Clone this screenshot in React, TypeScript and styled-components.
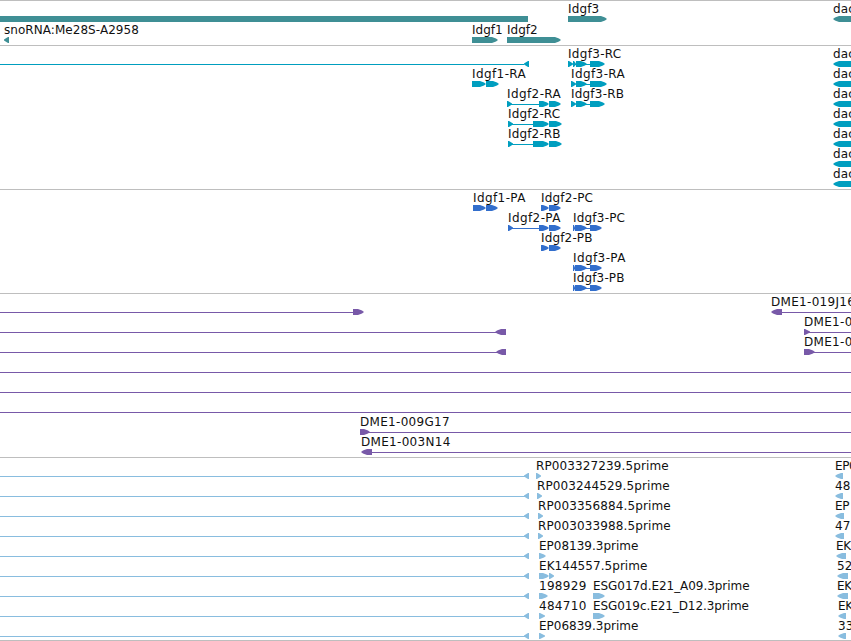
import React from "react";
import styled, { createGlobalStyle } from "styled-components";

type Kind = "line" | "bar" | "right" | "left";
type Glyph = [Kind, number, number];
type LabelItem = { x: number; text: string; gap?: number };
type RowData = { labels?: LabelItem[]; glyphs: Glyph[] };
type TrackData = { color: string; rowHeight?: number; pad: number; rows: RowData[] };

const VIEW_WIDTH = 851;

const GlobalStyle = createGlobalStyle`
  body {
    margin: 0;
    background: white;
    overflow: hidden;
  }
`;

const Viewer = styled.main`
  display: flex;
  flex-direction: column;
  width: ${VIEW_WIDTH}px;
  height: 641px;
  overflow: hidden;
  border-bottom: 1px solid #bebebe;
  box-sizing: border-box;
`;

const Track = styled.section<{ $pad: number }>`
  display: flex;
  flex-direction: column;
  flex: none;
  border-top: 1px solid #bebebe;
  padding-bottom: ${({ $pad }) => $pad}px;
`;

const Row = styled.div<{ $height: number }>`
  position: relative;
  height: ${({ $height }) => $height}px;
  padding-top: 15px;
  box-sizing: border-box;
`;

// labels sit at their genome position
const Label = styled.span<{ $x: number; $gap: number }>`
  position: absolute;
  top: 1px;
  left: ${({ $x }) => $x}px;
  font-family: "DejaVu Sans", sans-serif;
  font-size: 12px;
  line-height: 14px;
  letter-spacing: ${({ $gap }) => $gap}px;
  white-space: nowrap;
  color: #111;
`;

const Glyphs = styled.svg`
  display: block;
  width: ${VIEW_WIDTH}px;
  height: 6px;
`;

// glyph shorthands
const line = (a: number, b: number): Glyph => ["line", a, b];
const bar = (a: number, b: number): Glyph => ["bar", a, b];
const right = (a: number, b: number): Glyph => ["right", a, b];
const left = (a: number, b: number): Glyph => ["left", a, b];

const END = 860;
const dac: LabelItem = { x: 833, text: "dac" };
const dacBox = left(833, END);
const idgf2Tail = [right(549, 562)];
const idgf3Exons = [right(575, 587), line(585, 590), right(590, 602)];

const tracks: TrackData[] = [
  {
    color: "#3f8f95",
    rowHeight: 21,
    pad: 2,
    rows: [
      {
        labels: [{ x: 568, text: "Idgf3" }, dac],
        glyphs: [bar(0, 528), right(568, 607), dacBox],
      },
      {
        labels: [
          { x: 4, text: "snoRNA:Me28S-A2958", gap: 0.05 },
          { x: 472, text: "Idgf1", gap: 0 },
          { x: 507, text: "Idgf2", gap: 0 },
        ],
        glyphs: [left(4, 9), right(472, 498), right(507, 561)],
      },
    ],
  },
  {
    color: "#009ebf",
    pad: 3,
    rows: [
      {
        labels: [{ x: 568, text: "Idgf3-RC", gap: 0.3 }, dac],
        glyphs: [
          line(0, 524),
          left(524, 529),
          right(568, 573),
          right(573, 576),
          right(576, 587),
          line(585, 590),
          right(590, 605),
          dacBox,
        ],
      },
      {
        labels: [
          { x: 472, text: "Idgf1-RA", gap: 0.4 },
          { x: 571, text: "Idgf3-RA", gap: 0.4 },
          dac,
        ],
        glyphs: [
          right(472, 486),
          right(486, 499),
          right(571, 576),
          right(576, 587),
          line(585, 590),
          right(590, 607),
          dacBox,
        ],
      },
      {
        labels: [
          { x: 507, text: "Idgf2-RA", gap: 0.4 },
          { x: 571, text: "Idgf3-RB", gap: 0.2 },
          dac,
        ],
        glyphs: [
          right(507, 512),
          line(511, 539),
          right(539, 549),
          right(549, 561),
          right(571, 576),
          right(576, 587),
          line(585, 590),
          right(590, 605),
          dacBox,
        ],
      },
      {
        labels: [{ x: 508, text: "Idgf2-RC" }, dac],
        glyphs: [right(508, 513), line(512, 533), right(533, 549), ...idgf2Tail, dacBox],
      },
      {
        labels: [{ x: 508, text: "Idgf2-RB" }, dac],
        glyphs: [right(508, 513), line(512, 533), right(533, 549), ...idgf2Tail, dacBox],
      },
      { labels: [dac], glyphs: [dacBox] },
      { labels: [dac], glyphs: [dacBox] },
    ],
  },
  {
    color: "#326ecc",
    pad: 3,
    rows: [
      {
        labels: [
          { x: 473, text: "Idgf1-PA", gap: 0.4 },
          { x: 541, text: "Idgf2-PC", gap: 0.2 },
        ],
        glyphs: [right(473, 486), right(486, 498), right(541, 549), right(549, 561)],
      },
      {
        labels: [
          { x: 508, text: "Idgf2-PA", gap: 0.4 },
          { x: 573, text: "Idgf3-PC", gap: 0.2 },
        ],
        glyphs: [
          right(508, 513),
          line(512, 539),
          right(539, 549),
          right(549, 561),
          right(573, 575),
          ...idgf3Exons,
        ],
      },
      {
        labels: [{ x: 541, text: "Idgf2-PB" }],
        glyphs: [right(541, 549), right(549, 561)],
      },
      {
        labels: [{ x: 573, text: "Idgf3-PA", gap: 0.4 }],
        glyphs: [right(573, 575), ...idgf3Exons],
      },
      {
        labels: [{ x: 573, text: "Idgf3-PB" }],
        glyphs: [right(573, 575), ...idgf3Exons],
      },
    ],
  },
  {
    color: "#7859a8",
    pad: 3,
    rows: [
      {
        labels: [{ x: 771, text: "DME1-019J16", gap: 0.3 }],
        glyphs: [line(0, 353), right(353, 364), left(771, 782), line(782, END)],
      },
      {
        labels: [{ x: 804, text: "DME1-0", gap: 0.3 }],
        glyphs: [line(0, 497), left(495, 506), right(804, 810), line(808, END)],
      },
      {
        labels: [{ x: 804, text: "DME1-0", gap: 0.3 }],
        glyphs: [line(0, 498), left(496, 506), right(804, 815), line(812, END)],
      },
      { glyphs: [line(0, END)] },
      { glyphs: [line(0, END)] },
      { glyphs: [line(0, END)] },
      {
        labels: [{ x: 360, text: "DME1-009G17", gap: 0.3 }],
        glyphs: [right(360, 370), line(367, END)],
      },
      {
        labels: [{ x: 361, text: "DME1-003N14", gap: 0.3 }],
        glyphs: [left(361, 372), line(372, END)],
      },
    ],
  },
  {
    color: "#89bddf",
    pad: 2,
    rows: [
      {
        labels: [
          { x: 536, text: "RP003327239.5prime", gap: 0.12 },
          { x: 835, text: "EP0", gap: -0.4 },
        ],
        glyphs: [line(0, 525), left(524, 529), right(536, 541), left(835, 843)],
      },
      {
        labels: [
          { x: 537, text: "RP003244529.5prime", gap: 0.12 },
          { x: 835, text: "48" },
        ],
        glyphs: [line(0, 525), left(524, 529), right(537, 542), left(835, 843)],
      },
      {
        labels: [
          { x: 538, text: "RP003356884.5prime", gap: 0.12 },
          { x: 835, text: "EP", gap: -0.4 },
        ],
        glyphs: [line(0, 525), left(524, 529), right(538, 543), left(835, 844)],
      },
      {
        labels: [
          { x: 538, text: "RP003033988.5prime", gap: 0.12 },
          { x: 835, text: "47" },
        ],
        glyphs: [line(0, 525), left(524, 529), right(538, 543), left(835, 844)],
      },
      {
        labels: [
          { x: 539, text: "EP08139.3prime", gap: 0 },
          { x: 836, text: "EK", gap: -0.4 },
        ],
        glyphs: [line(0, 525), left(524, 529), right(539, 546), left(836, 846)],
      },
      {
        labels: [
          { x: 539, text: "EK144557.5prime", gap: 0.05 },
          { x: 837, text: "52" },
        ],
        glyphs: [
          line(0, 525),
          left(524, 529),
          right(539, 549),
          right(549, 554),
          left(837, 848),
        ],
      },
      {
        labels: [
          { x: 539, text: "198929", gap: 0.3 },
          { x: 593, text: "ESG017d.E21_A09.3prime", gap: -0.05 },
          { x: 837, text: "EK", gap: -0.4 },
        ],
        glyphs: [
          line(0, 525),
          left(524, 529),
          right(539, 548),
          right(593, 605),
          left(837, 848),
        ],
      },
      {
        labels: [
          { x: 539, text: "484710", gap: 0.3 },
          { x: 593, text: "ESG019c.E21_D12.3prime", gap: -0.08 },
          { x: 838, text: "EK", gap: -0.4 },
        ],
        glyphs: [
          line(0, 525),
          left(524, 529),
          right(539, 545),
          right(593, 605),
          left(838, 846),
        ],
      },
      {
        labels: [
          { x: 539, text: "EP06839.3prime", gap: 0 },
          { x: 838, text: "33" },
        ],
        glyphs: [line(0, 525), left(524, 529), right(539, 545), left(838, 846)],
      },
    ],
  },
];

// boxes taper in two steps, short ones are plain arrowheads
const shapeOf = ([kind, a, b]: Glyph) => {
  const short = b - a < 7;
  switch (kind) {
    case "line":
      return `M${a} 3H${b}V4H${a}Z`;
    case "bar":
      return `M${a} 0H${b}V6H${a}Z`;
    case "right":
      return short
        ? `M${a} 0H${a + 1}L${b} 2.5V3.5L${a + 1} 6H${a}Z`
        : `M${a} 0H${b - 6}L${b - 2} 1.5L${b} 3L${b - 2} 4.5L${b - 6} 6H${a}Z`;
    case "left":
      return short
        ? `M${b} 0H${b - 1}L${a} 2.5V3.5L${b - 1} 6H${b}Z`
        : `M${b} 0H${a + 6}L${a + 2} 1.5L${a} 3L${a + 2} 4.5L${a + 6} 6H${b}Z`;
  }
};

const App = () => (
  <>
    <GlobalStyle />
    <Viewer>
      {tracks.map(({ color, rowHeight = 20, pad, rows }, t) => (
        <Track key={t} $pad={pad}>
          {rows.map(({ labels = [], glyphs }, r) => (
            <Row key={r} $height={rowHeight}>
              {labels.map(({ x, text, gap = 0.15 }) => (
                <Label key={x} $x={x} $gap={gap}>
                  {text}
                </Label>
              ))}
              <Glyphs viewBox={`0 0 ${VIEW_WIDTH} 6`} fill={color}>
                {glyphs.map((glyph, g) => (
                  <path key={g} d={shapeOf(glyph)} />
                ))}
              </Glyphs>
            </Row>
          ))}
        </Track>
      ))}
    </Viewer>
  </>
);

export default App;
